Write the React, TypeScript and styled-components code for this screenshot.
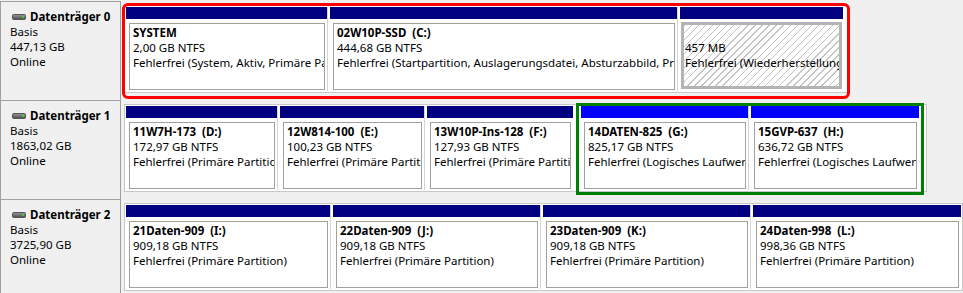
import styled, { createGlobalStyle } from "styled-components";

type Part = {
  name?: string;
  size: string;
  status: string;
  width: number;
  logical?: boolean;
  selected?: boolean;
};

type Disk = {
  title: string;
  size: string;
  areaWidth: number;
  groups: { frame?: "red" | "green"; gap?: number; parts: Part[] }[];
};

const disks: Disk[] = [
  {
    title: "Datenträger 0",
    size: "447,13 GB",
    areaWidth: 724,
    groups: [
      {
        frame: "red",
        parts: [
          { name: "SYSTEM", size: "2,00 GB NTFS", status: "Fehlerfrei (System, Aktiv, Primäre Partition)", width: 201 },
          {
            name: "02W10P-SSD  (C:)",
            size: "444,68 GB NTFS",
            status: "Fehlerfrei (Startpartition, Auslagerungsdatei, Absturzabbild, Primäre Partition)",
            width: 350,
          },
          { size: "457 MB", status: "Fehlerfrei (Wiederherstellungspartition)", width: 166, selected: true },
        ],
      },
    ],
  },
  {
    title: "Datenträger 1",
    size: "1863,02 GB",
    areaWidth: 803,
    groups: [
      {
        parts: [
          { name: "11W7H-173  (D:)", size: "172,97 GB NTFS", status: "Fehlerfrei (Primäre Partition)", width: 151 },
          { name: "12W814-100  (E:)", size: "100,23 GB NTFS", status: "Fehlerfrei (Primäre Partition)", width: 147 },
          { name: "13W10P-Ins-128  (F:)", size: "127,93 GB NTFS", status: "Fehlerfrei (Primäre Partition)", width: 149 },
        ],
      },
      {
        frame: "green",
        gap: 8,
        parts: [
          { name: "14DATEN-825  (G:)", size: "825,17 GB NTFS", status: "Fehlerfrei (Logisches Laufwerk)", width: 167, logical: true },
          { name: "15GVP-637  (H:)", size: "636,72 GB NTFS", status: "Fehlerfrei (Logisches Laufwerk)", width: 171, logical: true },
        ],
      },
    ],
  },
  {
    title: "Datenträger 2",
    size: "3725,90 GB",
    areaWidth: 839,
    groups: [
      {
        parts: [
          { name: "21Daten-909  (I:)", size: "909,18 GB NTFS", status: "Fehlerfrei (Primäre Partition)", width: 204 },
          { name: "22Daten-909  (J:)", size: "909,18 GB NTFS", status: "Fehlerfrei (Primäre Partition)", width: 210 },
          { name: "23Daten-909  (K:)", size: "909,18 GB NTFS", status: "Fehlerfrei (Primäre Partition)", width: 210 },
          { name: "24Daten-998  (L:)", size: "998,36 GB NTFS", status: "Fehlerfrei (Primäre Partition)", width: 211 },
        ],
      },
    ],
  },
];

const DriveIcon = () => (
  <svg width="14" height="6" viewBox="0 0 14 6">
    <defs>
      <linearGradient id="hdd" x1="0" y1="0" x2="0" y2="1">
        <stop offset="0" stopColor="#9a9a9a" />
        <stop offset="1" stopColor="#4a4a4a" />
      </linearGradient>
    </defs>
    <rect x="0.5" y="0.5" width="13" height="5" rx="1" fill="url(#hdd)" stroke="#555" strokeWidth="1" />
    <rect x="10" y="2" width="2" height="2" fill="#3ccb3c" />
  </svg>
);

const App = () => {
  return (
    <>
      <GlobalStyle />
      <Page>
        {disks.map((disk) => (
          <Row key={disk.title}>
            <Label>
              <Title>
                <DriveIcon />
                {disk.title}
              </Title>
              <div>Basis</div>
              <div>{disk.size}</div>
              <div>Online</div>
            </Label>
            <Area style={{ width: disk.areaWidth }}>
              {disk.groups.map((group, gi) => (
                <Group key={gi} $frame={group.frame} style={{ marginLeft: group.gap ?? 0 }}>
                  {group.parts.map((part, pi) => (
                    <Partition key={pi} $first={pi === 0} style={{ width: part.width }}>
                      <Header $logical={part.logical} />
                      <Body>
                        <Box $selected={part.selected}>
                          <Name>{part.name ?? "\u00a0"}</Name>
                          <Line>{part.size}</Line>
                          <Line>{part.status}</Line>
                        </Box>
                      </Body>
                    </Partition>
                  ))}
                </Group>
              ))}
            </Area>
          </Row>
        ))}
      </Page>
    </>
  );
};

export default App;

const GlobalStyle = createGlobalStyle`
  html, body {
    margin: 0;
    padding: 0;
    background: #f0f0f0;
    font-family: "Noto Sans", "Open Sans", sans-serif;
    font-size: 11.5px;
    color: #000;
  }
  * {
    box-sizing: border-box;
  }
`;

const Page = styled.div`
  width: 963px;
  height: 293px;
  overflow: hidden;
  padding-top: 1px;
`;

const Row = styled.div`
  display: flex;
  align-items: flex-start;
  height: 99px;
`;

const Label = styled.div`
  width: 121px;
  height: 99px;
  flex-shrink: 0;
  border: 1px solid #a0a0a0;
  border-bottom: none;
  padding: 7px 0 0 9px;
  line-height: 15px;
  font-size: 11.5px;
`;

const Title = styled.div`
  display: flex;
  align-items: center;
  gap: 4px;
  font-weight: bold;
  margin-left: 2px;
`;

const Area = styled.div`
  flex-shrink: 0;
  margin: 4px 0 0 3px;
  border: 1px solid #c8c8c8;
  padding: 1px;
  background: #fff;
  display: flex;
`;

const frameColor = { red: "#ff0000", green: "#008000" };

const Group = styled.div<{ $frame?: "red" | "green" }>`
  position: relative;
  flex-shrink: 0;
  display: flex;

  &::after {
    content: "";
    display: ${(p) => (p.$frame ? "block" : "none")};
    position: absolute;
    pointer-events: none;
    border: 3px solid ${(p) => (p.$frame ? frameColor[p.$frame] : "transparent")};
    border-radius: ${(p) => (p.$frame === "red" ? "6px" : "0")};
    inset: ${(p) => (p.$frame === "red" ? "-4px -7px -8px -4px" : "-3px -5px -5px -5px")};
  }
`;

const Partition = styled.div<{ $first: boolean }>`
  flex-shrink: 0;
  min-width: 0;
  display: flex;
  flex-direction: column;
  height: 84px;
  border-left: ${(p) => (p.$first ? "none" : "1px solid #d4d4d4")};
  padding-left: ${(p) => (p.$first ? "0" : "2px")};
`;

const Header = styled.div<{ $logical?: boolean }>`
  height: 12px;
  background: ${(p) => (p.$logical ? "#0000ff" : "#000080")};
`;

const Body = styled.div`
  flex: 1;
  min-width: 0;
  padding: 4px 2px 1px 3px;
  display: flex;
`;

const Box = styled.div<{ $selected?: boolean }>`
  flex: 1;
  min-width: 0;
  height: 67px;
  overflow: hidden;
  white-space: pre;
  line-height: 15px;
  border: ${(p) => (p.$selected ? "3px solid #b4b4b4" : "1px solid #a0a0a0")};
  margin: ${(p) => (p.$selected ? "-1px -1px 0 -2px" : "0")};
  padding: ${(p) => (p.$selected ? "0 0 0 1px" : "1px 0 0 3px")};
  background: ${(p) =>
    p.$selected
      ? "repeating-linear-gradient(135deg, #c4c4c4 0 1px, #ffffff 1px 5px)"
      : "#fff"};
`;

const Name = styled.div`
  font-weight: bold;
`;

const Line = styled.div``;
